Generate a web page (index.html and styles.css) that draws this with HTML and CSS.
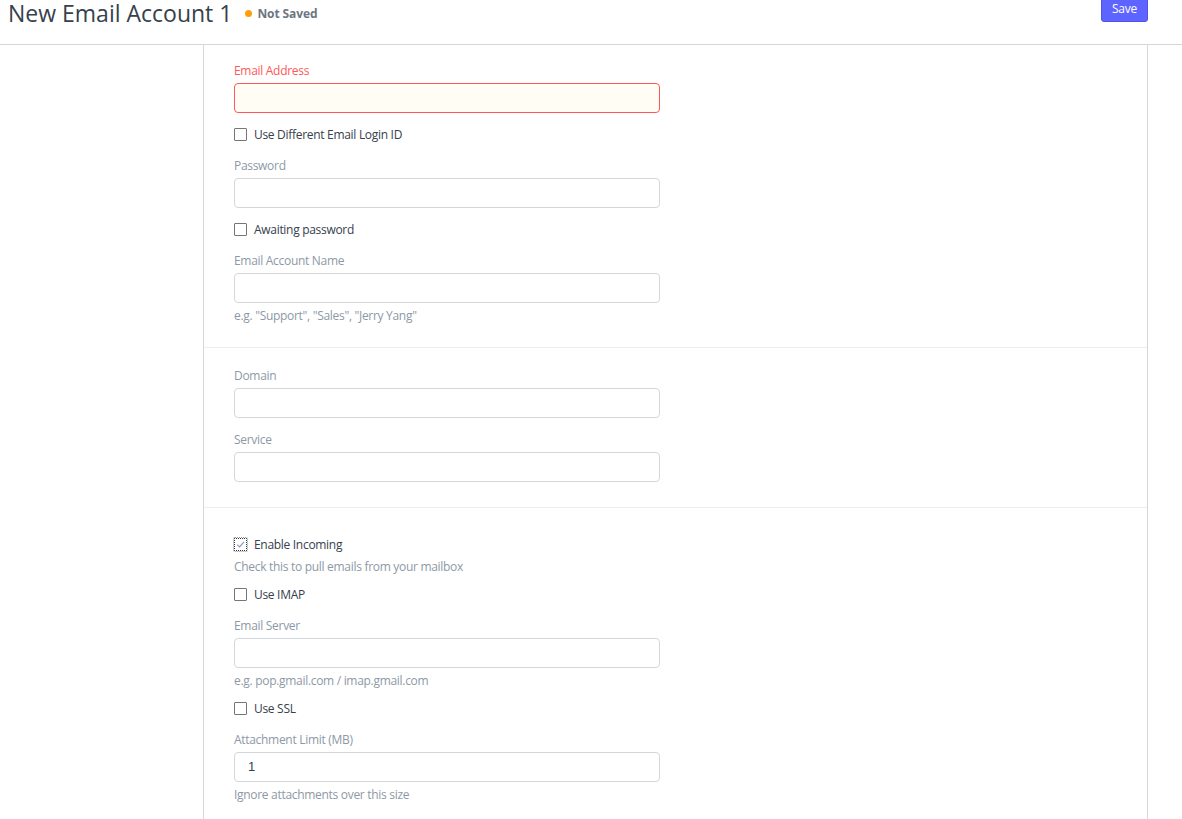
FILE: index.html
```html
<!DOCTYPE html>
<html>
<head>
<meta charset="utf-8">
<title>New Email Account 1</title>
<link rel="stylesheet" href="styles.css">
</head>
<body>
<header class="page-head">
  <div class="title-wrap">
    <h1 class="title">New Email Account 1</h1>
    <span class="status"><span class="dot"></span>Not Saved</span>
  </div>
  <button class="btn-save">Save</button>
</header>
<div class="layout">
  <div class="sidebar"></div>
  <main class="form">
    <section class="section section-first">
      <div class="field">
        <label class="label label-error">Email Address</label>
        <div class="input input-error"></div>
      </div>
      <div class="check"><span class="box"></span><span class="check-text">Use Different Email Login ID</span></div>
      <div class="field">
        <label class="label">Password</label>
        <div class="input"></div>
      </div>
      <div class="check"><span class="box"></span><span class="check-text">Awaiting password</span></div>
      <div class="field">
        <label class="label">Email Account Name</label>
        <div class="input"></div>
        <div class="help">e.g. "Support", "Sales", "Jerry Yang"</div>
      </div>
    </section>
    <section class="section">
      <div class="field">
        <label class="label">Domain</label>
        <div class="input"></div>
      </div>
      <div class="field">
        <label class="label">Service</label>
        <div class="input"></div>
      </div>
    </section>
    <section class="section section-incoming">
      <div class="check">
        <span class="box box-checked">
          <svg viewBox="0 0 12 12" width="11" height="11"><path d="M2.5 6.2 L5 8.6 L9.8 3.2" fill="none" stroke="#7f97b3" stroke-width="1.2"/></svg>
        </span>
        <span class="check-text">Enable Incoming</span>
      </div>
      <div class="help help-check">Check this to pull emails from your mailbox</div>
      <div class="check"><span class="box"></span><span class="check-text">Use IMAP</span></div>
      <div class="field">
        <label class="label">Email Server</label>
        <div class="input"></div>
        <div class="help">e.g. pop.gmail.com / imap.gmail.com</div>
      </div>
      <div class="check"><span class="box"></span><span class="check-text">Use SSL</span></div>
      <div class="field">
        <label class="label">Attachment Limit (MB)</label>
        <div class="input">1</div>
        <div class="help">Ignore attachments over this size</div>
      </div>
    </section>
  </main>
</div>
</body>
</html>
```

FILE: styles.css
```css
html, body {
  margin: 0;
  padding: 0;
  background: #fff;
  font-family: "Open Sans", "Noto Sans", sans-serif;
  color: #36414c;
  overflow: hidden;
}

.page-head {
  height: 45px;
  border-bottom: 1px solid #d1d8dd;
  display: flex;
  justify-content: space-between;
  align-items: flex-start;
  padding: 0 34px 0 8px;
  box-sizing: border-box;
}

.title-wrap {
  display: flex;
  align-items: center;
  height: 26px;
}

.title {
  margin: 0;
  font-weight: 400;
  font-size: 23px;
  line-height: 26px;
  color: #36414c;
}

.status {
  display: flex;
  align-items: center;
  margin-left: 13px;
  font-size: 12px;
  font-weight: 700;
  color: #6c7680;
  letter-spacing: -0.1px;
}

.dot {
  width: 7px;
  height: 7px;
  border-radius: 50%;
  background: #ff9f0a;
  margin-right: 5px;
}

.btn-save {
  margin-top: -5px;
  height: 27px;
  width: 47px;
  border: 1px solid #4e54e8;
  background: #5e64ff;
  color: #fff;
  border-radius: 3px;
  font-family: inherit;
  font-size: 12px;
  letter-spacing: -0.2px;
  padding: 0;
}

.layout {
  display: grid;
  grid-template-columns: 203px 945px;
}

.form {
  border-left: 1px solid #d1d8dd;
  border-right: 1px solid #d1d8dd;
  min-height: 800px;
}

.section {
  padding: 19px 30px 12px;
  border-top: 1px solid #ebeff2;
}

.section-first {
  border-top: none;
  padding-top: 17px;
  padding-bottom: 13px;
}

.section-incoming {
  padding-top: 28px;
}

.field {
  margin-bottom: 13px;
  width: 426px;
}

.label {
  display: block;
  font-size: 12px;
  letter-spacing: -0.3px;
  line-height: 18px;
  color: #8d99a6;
  margin-bottom: 3px;
}

.label-error {
  color: #ff5858;
}

.input {
  height: 30px;
  box-sizing: border-box;
  border: 1px solid #d1d8dd;
  border-radius: 4px;
  background: #fff;
  font-family: "Liberation Sans", sans-serif;
  font-size: 13px;
  line-height: 28px;
  padding: 0 13px;
  color: #36414c;
}

.input-error {
  border-color: #ff5858;
  background: #fffdf4;
}

.help {
  font-size: 12px;
  letter-spacing: -0.3px;
  line-height: 16px;
  color: #8d99a6;
  margin: 5px 0 -3px;
}

.help-check {
  margin: -8px 0 11px;
}

.check {
  display: flex;
  align-items: center;
  height: 18px;
  margin: -1px 0 14px;
}

.box {
  width: 13px;
  height: 13px;
  box-sizing: border-box;
  border: 1px solid #767676;
  border-radius: 1px;
  margin-right: 7px;
  display: flex;
  align-items: center;
  justify-content: center;
}

.box-checked {
  border: 1px dotted #333;
  outline: 1px dotted #999;
}

.check-text {
  font-size: 12px;
  letter-spacing: -0.3px;
  color: #36414c;
}
```
